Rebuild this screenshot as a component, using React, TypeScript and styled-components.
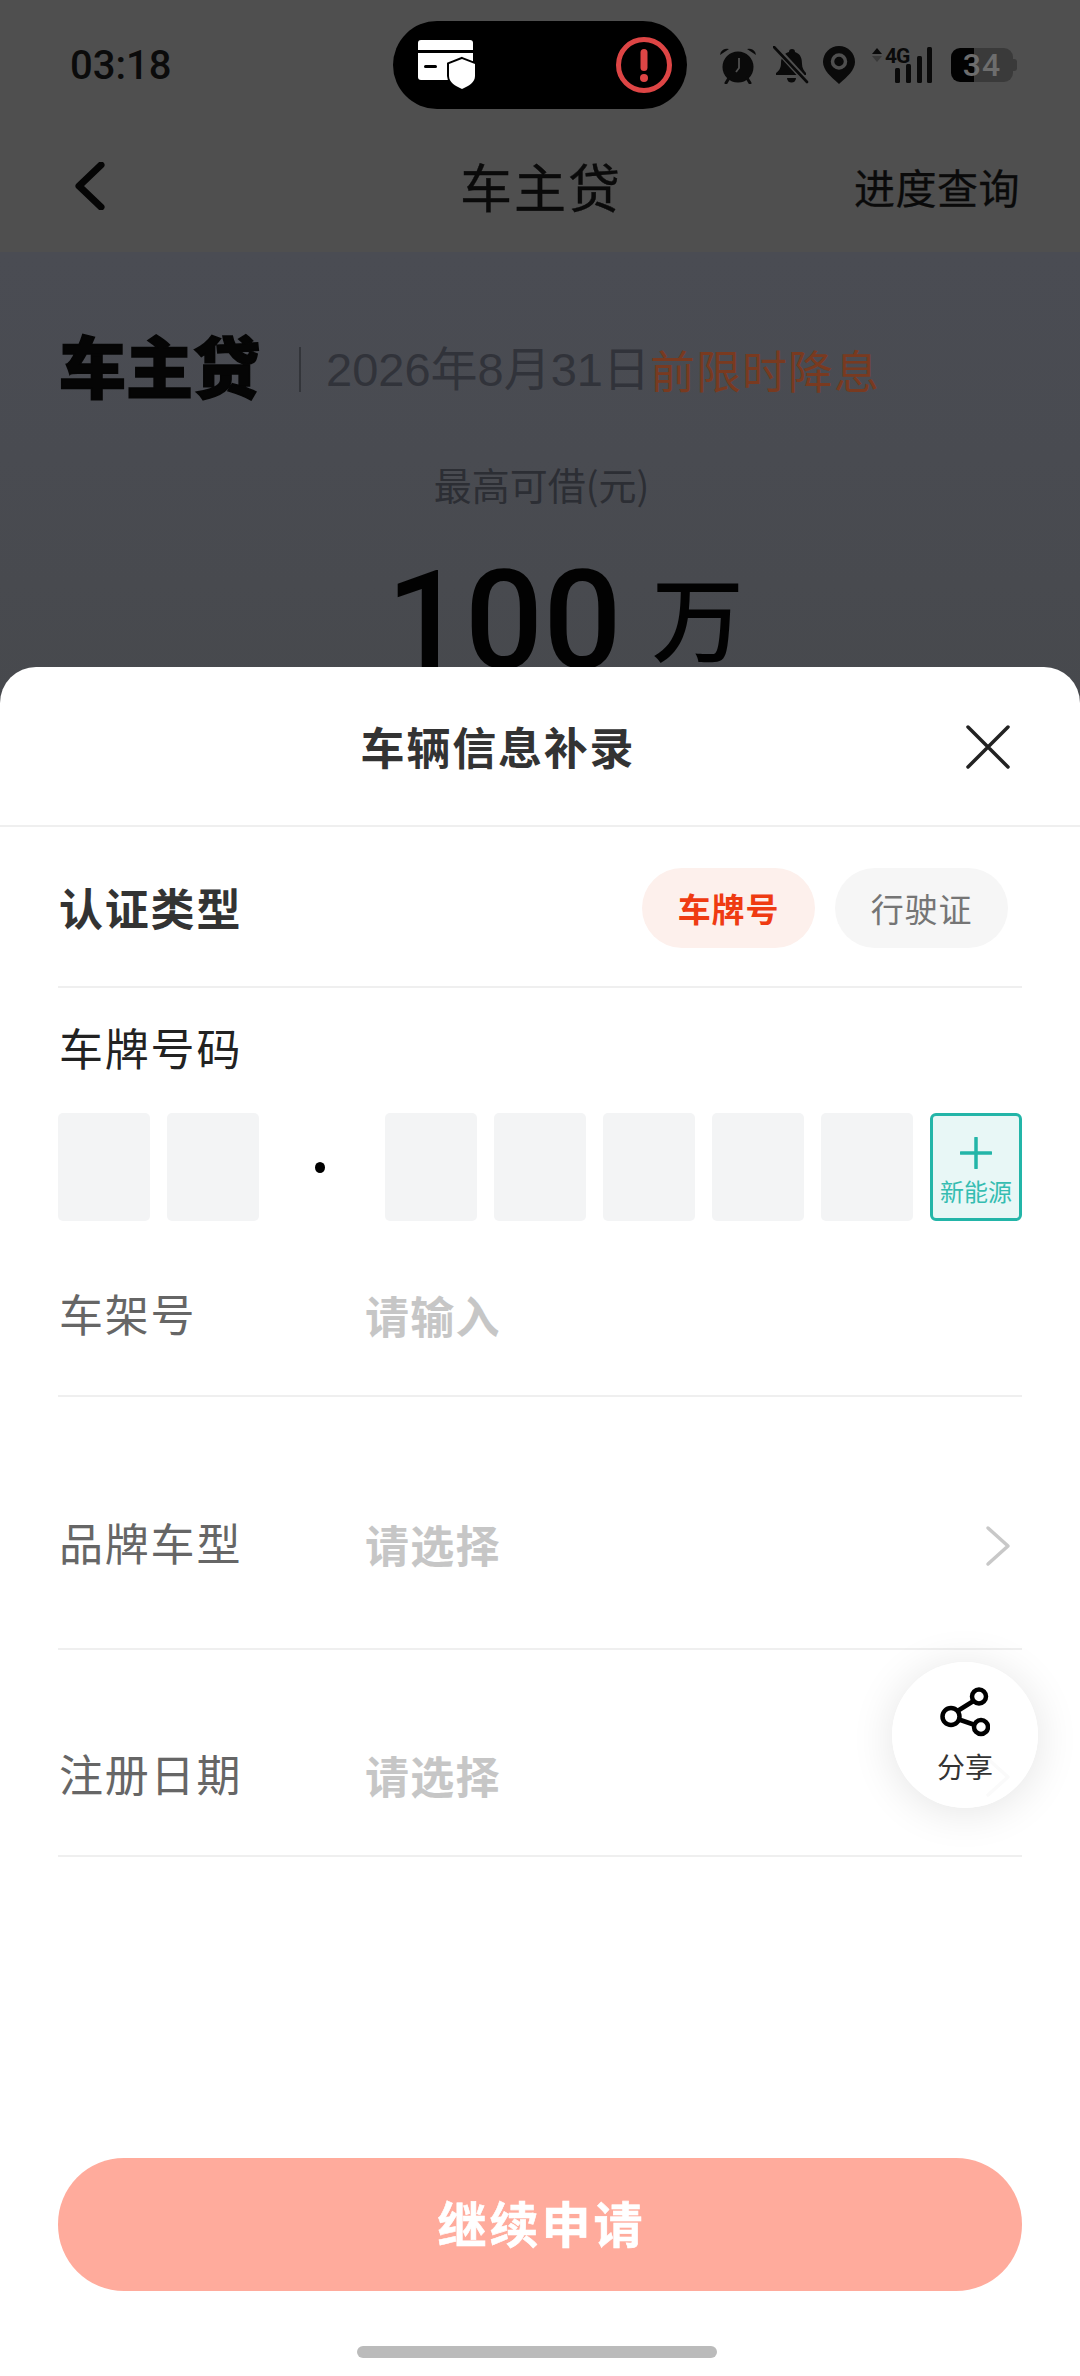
import React from "react";
import styled, { createGlobalStyle } from "styled-components";

const GlobalStyle = createGlobalStyle`
  html, body {
    margin: 0;
    padding: 0;
    background: #47494e;
  }
  * {
    box-sizing: border-box;
  }
`;

const cjk = `"Noto Sans CJK SC", "Noto Sans", sans-serif`;
const latin = `Roboto, "Noto Sans CJK SC", sans-serif`;

const Screen = styled.div`
  width: 1080px;
  height: 2376px;
  display: flex;
  flex-direction: column;
  overflow: hidden;
  background: #4f4f4f;
  font-family: ${cjk};
`;

const StatusBar = styled.div`
  height: 130px;
  flex-shrink: 0;
  display: flex;
  align-items: center;
  padding-left: 70px;
  color: #0b0b0b;
`;

const Time = styled.div`
  width: 323px;
  font-family: ${latin};
  font-size: 40px;
  font-weight: 500;
`;

const Island = styled.div`
  width: 294px;
  height: 88px;
  border-radius: 44px;
  background: #000;
  display: flex;
  align-items: center;
  justify-content: space-between;
  padding: 0 14px 0 25px;
`;

const StatusIcons = styled.div`
  display: flex;
  align-items: center;
  margin-left: 32px;
`;

const Battery = styled.div`
  position: relative;
  width: 62px;
  height: 34px;
  margin-left: 18px;
  border-radius: 9px;
  background: linear-gradient(to right, #020202 37%, #3a3a3a 37%);
  color: #6d6d6d;
  font-family: ${latin};
  font-size: 32px;
  font-weight: 500;
  line-height: 34px;
  text-align: center;
  letter-spacing: 1px;
  &::after {
    content: "";
    position: absolute;
    top: 11px;
    right: -4px;
    width: 4px;
    height: 12px;
    border-radius: 0 3px 3px 0;
    background: #3a3a3a;
  }
`;

const NavBar = styled.div`
  height: 122px;
  flex-shrink: 0;
  display: grid;
  grid-template-columns: 1fr auto 1fr;
  align-items: center;
  padding: 0 60px 10px 74px;
  color: #0a0a0a;
`;

const NavTitle = styled.div`
  margin-right: 12px;
  font-size: 52px;
  line-height: 60px;
  letter-spacing: 2px;
  -webkit-text-stroke: 0.4px #0a0a0a;
`;

const NavLink = styled.div`
  justify-self: end;
  font-size: 41px;
  line-height: 60px;
  letter-spacing: 0.5px;
  -webkit-text-stroke: 0.3px #0a0a0a;
`;

const Hero = styled.div`
  height: 455px;
  flex-shrink: 0;
  overflow: hidden;
  padding-top: 72px;
  background: linear-gradient(180deg, #4a4c53 0%, #494b51 45%, #47494d 100%);
`;

const Promo = styled.div`
  display: flex;
  align-items: center;
  height: 80px;
  padding-left: 59px;
`;

const PromoLogo = styled.div`
  font-size: 67px;
  line-height: 80px;
  font-weight: 900;
  color: #050505;
  -webkit-text-stroke: 1.6px #050505;
`;

const PromoBar = styled.div`
  width: 2px;
  height: 45px;
  margin: 10px 25px 0 39px;
  background: #33353a;
`;

const PromoDate = styled.span`
  font-family: "Liberation Sans", ${cjk};
  font-size: 47px;
  line-height: 60px;
  margin-top: 12px;
  color: #31333a;
`;

const PromoHighlight = styled.span`
  font-size: 45px;
  line-height: 60px;
  margin-top: 12px;
  letter-spacing: 1px;
  color: #793a20;
`;

const LimitLabel = styled.div`
  margin-top: 55px;
  padding-left: 3px;
  text-align: center;
  font-size: 38px;
  line-height: 50px;
  color: #2c2e34;
`;

const Amount = styled.div`
  display: flex;
  justify-content: center;
  align-items: flex-start;
  margin-top: 18px;
  padding-left: 50px;
  color: #020202;
`;

const AmountValue = styled.span`
  margin-top: 14px;
  font-family: Roboto, "Liberation Sans", sans-serif;
  font-size: 138px;
  line-height: 160px;
  font-weight: 500;
`;

const AmountUnit = styled.span`
  margin: 21px 0 0 30px;
  font-size: 92px;
  line-height: 133px;
  font-weight: 500;
`;

const Sheet = styled.div`
  position: relative;
  flex: 1;
  margin-top: -40px;
  display: flex;
  flex-direction: column;
  background: #fff;
  border-radius: 36px 36px 0 0;
`;

const SheetHeader = styled.div`
  position: relative;
  height: 160px;
  flex-shrink: 0;
  display: flex;
  align-items: center;
  justify-content: center;
  padding-right: 84px;
  border-bottom: 2px solid #efefef;
`;

const SheetTitle = styled.div`
  font-size: 44px;
  font-weight: 700;
  letter-spacing: 1.8px;
  color: #333;
`;

const CloseButton = styled.div`
  position: absolute;
  right: 70px;
  top: 58px;
  width: 44px;
  height: 44px;
`;

const Body = styled.div`
  padding: 0 58px;
`;

const TypeRow = styled.div`
  height: 161px;
  display: flex;
  align-items: center;
  justify-content: space-between;
  padding: 0 14px 0 1px;
  border-bottom: 2px solid #efefef;
`;

const TypeLabel = styled.div`
  font-size: 44px;
  font-weight: 700;
  letter-spacing: 1.8px;
  color: #333;
`;

const Pills = styled.div`
  display: flex;
  gap: 20px;
  margin-top: 2px;
`;

const Pill = styled.div<{ $active?: boolean }>`
  width: 173px;
  height: 80px;
  border-radius: 40px;
  display: flex;
  align-items: center;
  justify-content: center;
  font-size: 33px;
  letter-spacing: 0.8px;
  font-weight: ${(p) => (p.$active ? 700 : 400)};
  color: ${(p) => (p.$active ? "#ef3b12" : "#757575")};
  background: ${(p) => (p.$active ? "#fdf0ec" : "#f6f6f6")};
`;

const PlateLabel = styled.div`
  padding: 27px 0 0 1px;
  height: 125px;
  font-size: 44px;
  line-height: 64px;
  letter-spacing: 1.8px;
  color: #222;
`;

const PlateRow = styled.div`
  display: flex;
  gap: 17px;
`;

const PlateCell = styled.div`
  width: 92px;
  height: 108px;
  border-radius: 5px;
  background: #f3f4f5;
`;

const PlateDot = styled.div`
  width: 92px;
  display: flex;
  align-items: center;
  justify-content: center;
  padding-right: 4px;
  &::after {
    content: "";
    width: 10px;
    height: 11px;
    border-radius: 50%;
    background: #000;
  }
`;

const EnergyCell = styled.div`
  width: 92px;
  height: 108px;
  border: 3px solid #23b5a8;
  border-radius: 6px;
  background: #e8f7f6;
  display: flex;
  flex-direction: column;
  align-items: center;
  padding-top: 21px;
  color: #35bdb1;
`;

const EnergyLabel = styled.div`
  margin-top: 7px;
  font-size: 24px;
  line-height: 30px;
  white-space: nowrap;
`;

const FieldRow = styled.div<{ $height: number; $top: number }>`
  position: relative;
  height: ${(p) => p.$height}px;
  padding: ${(p) => p.$top}px 11px 0 1px;
  display: flex;
  align-items: flex-start;
  border-bottom: 2px solid #efefef;
`;

const FieldLabel = styled.div`
  width: 306px;
  margin-top: -2px;
  font-size: 44px;
  line-height: 60px;
  letter-spacing: 1.8px;
  color: #666;
`;

const FieldValue = styled.div`
  flex: 1;
  font-size: 44px;
  line-height: 60px;
  font-weight: 700;
  letter-spacing: 1.2px;
  color: #c6c6c6;
`;

const Chevron = styled.svg`
  width: 26px;
  height: 42px;
  margin-top: 11px;
`;

const Footer = styled.div`
  margin-top: auto;
  padding: 0 58px;
`;

const SubmitButton = styled.button`
  display: flex;
  align-items: center;
  justify-content: center;
  width: 100%;
  height: 133px;
  padding: 0 0 6px 3px;
  border: none;
  border-radius: 66px;
  background: #ffab9c;
  color: #fff;
  font-family: ${cjk};
  font-size: 49px;
  font-weight: 700;
  letter-spacing: 3px;
  -webkit-text-stroke: 0.6px #fff;
`;

const HomeBar = styled.div`
  width: 360px;
  height: 12px;
  margin: 55px auto 18px;
  transform: translateX(-3px);
  border-radius: 6px;
  background: #bbb;
`;

const ShareButton = styled.div`
  position: absolute;
  right: 42px;
  top: 995px;
  width: 146px;
  height: 146px;
  border-radius: 50%;
  background: rgba(255, 255, 255, 0.9);
  box-shadow: 0 4px 44px rgba(0, 0, 0, 0.11);
  display: flex;
  flex-direction: column;
  align-items: center;
  padding-top: 25px;
`;

const ShareLabel = styled.div`
  margin-top: 12px;
  font-size: 28px;
  line-height: 34px;
  color: #333;
`;

const CardIcon = () => (
  <svg width="60" height="54" viewBox="0 0 60 54">
    <path d="M3 2h49a3 3 0 0 1 3 3v7H0V5a3 3 0 0 1 3-3z" fill="#fff" />
    <path d="M0 15h55v27H3a3 3 0 0 1-3-3z" fill="#fff" />
    <rect x="6" y="27" width="13" height="3" rx="1.500" fill="#000" />
    <path
      d="M44 21l13 5v12c0 6-6 10-13 13-7-3-13-7-13-13V26z"
      fill="#fff"
      stroke="#000"
      strokeWidth="4"
      paintOrder="stroke"
    />
  </svg>
);

const AlertIcon = () => (
  <svg width="58" height="58" viewBox="0 0 58 58">
    <circle cx="29" cy="29" r="25.500" fill="none" stroke="#dd4545" strokeWidth="5" />
    <rect x="25.500" y="13" width="7" height="22" rx="3.500" fill="#dd4545" />
    <circle cx="29" cy="42" r="4" fill="#dd4545" />
  </svg>
);

const AlarmIcon = () => (
  <svg width="38" height="38" viewBox="0 0 38 38">
    <circle cx="19" cy="21" r="15.500" fill="#0a0a0a" />
    <path d="M1 9a7 7 0 0 1 9-6zM37 9a7 7 0 0 0-9-6z" fill="#0a0a0a" />
    <path d="M7 37l3-5M31 37l-3-5" stroke="#0a0a0a" strokeWidth="3" strokeLinecap="round" />
    <path d="M20 12v10l-3 4" fill="none" stroke="#4f4f4f" strokeWidth="1.800" />
  </svg>
);

const BellOffIcon = () => (
  <svg width="36" height="38" viewBox="0 0 36 38" style={{ marginLeft: 16 }}>
    <path d="M19 3a3 3 0 0 1 3 3c6 2 7 7 7 12 0 4 2 7 4 9v2H3v-2c3-2 5-5 5-10 0-6 4-10 8-11a3 3 0 0 1 3-3z" fill="#0a0a0a" />
    <path d="M14 32h9a4.500 4.500 0 0 1-9 0z" fill="#0a0a0a" />
    <path d="M2 1l32 35" stroke="#4f4f4f" strokeWidth="6" />
    <path d="M1 1l33 35" stroke="#0a0a0a" strokeWidth="2.600" strokeLinecap="round" />
  </svg>
);

const PinIcon = () => (
  <svg width="32" height="38" viewBox="0 0 32 38" style={{ marginLeft: 14 }}>
    <path d="M16 0c9 0 16 7 16 16 0 8-8 15-16 22C8 31 0 24 0 16 0 7 7 0 16 0z" fill="#0a0a0a" />
    <circle cx="16" cy="15.500" r="6.500" fill="none" stroke="#4f4f4f" strokeWidth="3.500" />
  </svg>
);

const SignalIcon = () => (
  <svg width="62" height="38" viewBox="0 0 62 38" style={{ marginLeft: 16, overflow: "visible" }}>
    <path d="M6 2l5 6H1z" fill="#0a0a0a" />
    <path d="M6 16l5-6H1z" fill="#3a3a3a" />
    <text x="14" y="17" fontFamily="Roboto, sans-serif" fontSize="21" fontWeight="700" letterSpacing="-1" fill="#0a0a0a">
      4G
    </text>
    <rect x="24" y="22" width="5" height="15" rx="1.500" fill="#0a0a0a" />
    <rect x="35" y="18" width="5" height="19" rx="1.500" fill="#0a0a0a" />
    <rect x="46" y="10" width="5" height="27" rx="1.500" fill="#0a0a0a" />
    <rect x="56" y="1" width="5" height="36" rx="1.500" fill="#0a0a0a" />
  </svg>
);

const BackIcon = () => (
  <svg width="32" height="48" viewBox="0 0 32 48">
    <path d="M27 3L5 24l22 21" fill="none" stroke="#050505" strokeWidth="7" strokeLinecap="round" strokeLinejoin="round" />
  </svg>
);

const ShareIcon = () => (
  <svg width="50" height="50" viewBox="0 0 50 50">
    <g fill="none" stroke="#000" strokeWidth="4.500">
      <circle cx="39" cy="9.500" r="7" />
      <circle cx="11" cy="29.500" r="8.500" />
      <circle cx="41" cy="40" r="7" />
      <path d="M17.500 24l16-10M19 32.500l16 5.500" />
    </g>
  </svg>
);

const plateCells = ["a", "b", "dot", "c", "d", "e", "f", "g"];

const fields = [
  { label: "车架号", value: "请输入", height: 176, top: 64, arrow: false },
  { label: "品牌车型", value: "请选择", height: 253, top: 117, arrow: true },
  { label: "注册日期", value: "请选择", height: 207, top: 95, arrow: true },
];

export default function App() {
  return (
    <Screen>
      <GlobalStyle />
      <StatusBar>
        <Time>03:18</Time>
        <Island>
          <CardIcon />
          <AlertIcon />
        </Island>
        <StatusIcons>
          <AlarmIcon />
          <BellOffIcon />
          <PinIcon />
          <SignalIcon />
          <Battery>34</Battery>
        </StatusIcons>
      </StatusBar>

      <NavBar>
        <BackIcon />
        <NavTitle>车主贷</NavTitle>
        <NavLink>进度查询</NavLink>
      </NavBar>

      <Hero>
        <Promo>
          <PromoLogo>车主贷</PromoLogo>
          <PromoBar />
          <PromoDate>2026年8月31日</PromoDate>
          <PromoHighlight>前限时降息</PromoHighlight>
        </Promo>
        <LimitLabel>最高可借(元)</LimitLabel>
        <Amount>
          <AmountValue>100</AmountValue>
          <AmountUnit>万</AmountUnit>
        </Amount>
      </Hero>

      <Sheet>
        <SheetHeader>
          <SheetTitle>车辆信息补录</SheetTitle>
          <CloseButton>
            <svg width="44" height="44" viewBox="0 0 44 44">
              <path d="M2 2l40 40M42 2L2 42" stroke="#222" strokeWidth="3.500" strokeLinecap="round" />
            </svg>
          </CloseButton>
        </SheetHeader>

        <Body>
          <TypeRow>
            <TypeLabel>认证类型</TypeLabel>
            <Pills>
              <Pill $active>车牌号</Pill>
              <Pill>行驶证</Pill>
            </Pills>
          </TypeRow>

          <PlateLabel>车牌号码</PlateLabel>
          <PlateRow>
            {plateCells.map((id) =>
              id === "dot" ? <PlateDot key={id} /> : <PlateCell key={id} />
            )}
            <EnergyCell>
              <svg width="32" height="32" viewBox="0 0 32 32">
                <path d="M16 1v30M1 16h30" stroke="#23b5a8" strokeWidth="3.500" strokeLinecap="round" />
              </svg>
              <EnergyLabel>新能源</EnergyLabel>
            </EnergyCell>
          </PlateRow>

          {fields.map((f) => (
            <FieldRow key={f.label} $height={f.height} $top={f.top}>
              <FieldLabel>{f.label}</FieldLabel>
              <FieldValue>{f.value}</FieldValue>
              {f.arrow && (
                <Chevron viewBox="0 0 26 42">
                  <path d="M3 3l20 18L3 39" fill="none" stroke="#c8c8c8" strokeWidth="3.500" strokeLinecap="round" strokeLinejoin="round" />
                </Chevron>
              )}
            </FieldRow>
          ))}
        </Body>

        <Footer>
          <SubmitButton>继续申请</SubmitButton>
          <HomeBar />
        </Footer>

        <ShareButton>
          <ShareIcon />
          <ShareLabel>分享</ShareLabel>
        </ShareButton>
      </Sheet>
    </Screen>
  );
}
